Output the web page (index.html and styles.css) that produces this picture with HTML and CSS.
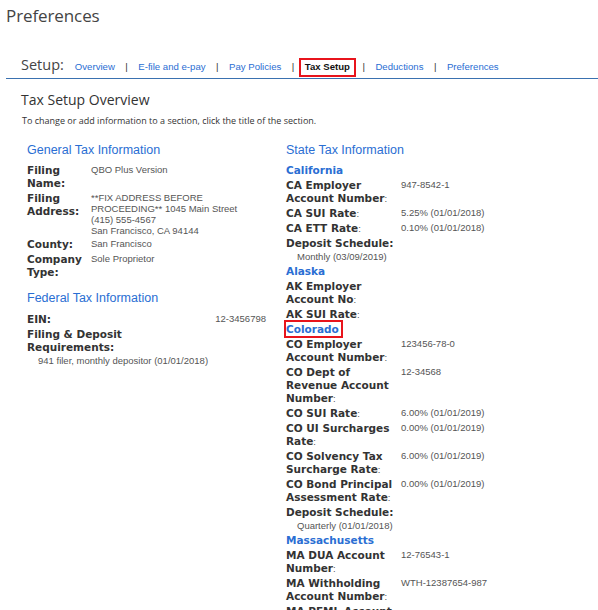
FILE: index.html
```html
<!DOCTYPE html>
<html>
<head>
<meta charset="utf-8">
<title>Preferences</title>
<link rel="stylesheet" href="styles.css">
</head>
<body>
<div class="page">
  <h1 class="page-title">Preferences</h1>
  <nav class="setup-bar">
    <span class="setup-label">Setup:</span>
    <div class="tabs">
      <a class="tab">Overview</a><span class="sep">|</span>
      <a class="tab">E-file and e-pay</a><span class="sep">|</span>
      <a class="tab">Pay Policies</a><span class="sep">|</span>
      <a class="tab active">Tax Setup</a><span class="sep">|</span>
      <a class="tab">Deductions</a><span class="sep">|</span>
      <a class="tab">Preferences</a>
    </div>
  </nav>

  <h2 class="overview-title">Tax Setup Overview</h2>
  <p class="hint">To change or add information to a section, click the title of the section.</p>

  <div class="columns">
    <div class="col col-left">
      <h3 class="sec-title">General Tax Information</h3>
      <div class="row gen">
        <div class="k">Filing Name:</div>
        <div class="v">QBO Plus Version</div>
      </div>
      <div class="row gen">
        <div class="k">Filing Address:</div>
        <div class="v">**FIX ADDRESS BEFORE<br>PROCEEDING** 1045 Main Street<br>(415) 555-4567<br>San Francisco, CA 94144</div>
      </div>
      <div class="row gen">
        <div class="k">County:</div>
        <div class="v">San Francisco</div>
      </div>
      <div class="row gen">
        <div class="k">Company Type:</div>
        <div class="v">Sole Proprietor</div>
      </div>

      <h3 class="sec-title federal">Federal Tax Information</h3>
      <div class="fed-row">
        <div class="k">EIN:</div>
        <div class="v">12-3456798</div>
      </div>
      <div class="block">
        <div class="k fed-k">Filing &amp; Deposit Requirements:</div>
        <div class="sub">941 filer, monthly depositor (01/01/2018)</div>
      </div>
    </div>

    <div class="col col-right">
      <h3 class="sec-title">State Tax Information</h3>

      <div class="state"><span class="state-name">California</span></div>
      <div class="row st">
        <div class="k">CA Employer Account Number<span class="c">:</span></div>
        <div class="v">947-8542-1</div>
      </div>
      <div class="row st">
        <div class="k">CA SUI Rate<span class="c">:</span></div>
        <div class="v">5.25% (01/01/2018)</div>
      </div>
      <div class="row st">
        <div class="k">CA ETT Rate<span class="c">:</span></div>
        <div class="v">0.10% (01/01/2018)</div>
      </div>
      <div class="block">
        <div class="k">Deposit Schedule:</div>
        <div class="sub">Monthly (03/09/2019)</div>
      </div>

      <div class="state"><span class="state-name">Alaska</span></div>
      <div class="row st">
        <div class="k">AK Employer Account No<span class="c">:</span></div>
        <div class="v"></div>
      </div>
      <div class="row st">
        <div class="k">AK SUI Rate<span class="c">:</span></div>
        <div class="v"></div>
      </div>

      <div class="state"><span class="state-name selected">Colorado</span></div>
      <div class="row st">
        <div class="k">CO Employer Account Number<span class="c">:</span></div>
        <div class="v">123456-78-0</div>
      </div>
      <div class="row st">
        <div class="k">CO Dept of Revenue Account Number<span class="c">:</span></div>
        <div class="v">12-34568</div>
      </div>
      <div class="row st">
        <div class="k">CO SUI Rate<span class="c">:</span></div>
        <div class="v">6.00% (01/01/2019)</div>
      </div>
      <div class="row st">
        <div class="k">CO UI Surcharges Rate<span class="c">:</span></div>
        <div class="v">0.00% (01/01/2019)</div>
      </div>
      <div class="row st">
        <div class="k">CO Solvency Tax Surcharge Rate<span class="c">:</span></div>
        <div class="v">6.00% (01/01/2019)</div>
      </div>
      <div class="row st">
        <div class="k">CO Bond Principal Assessment Rate<span class="c">:</span></div>
        <div class="v">0.00% (01/01/2019)</div>
      </div>
      <div class="block">
        <div class="k">Deposit Schedule:</div>
        <div class="sub">Quarterly (01/01/2018)</div>
      </div>

      <div class="state"><span class="state-name">Massachusetts</span></div>
      <div class="row st">
        <div class="k">MA DUA Account Number<span class="c">:</span></div>
        <div class="v">12-76543-1</div>
      </div>
      <div class="row st">
        <div class="k">MA Withholding Account Number<span class="c">:</span></div>
        <div class="v">WTH-12387654-987</div>
      </div>
      <div class="row st">
        <div class="k">MA PFML Account Number<span class="c">:</span></div>
        <div class="v"></div>
      </div>
    </div>
  </div>
</div>
</body>
</html>
```

FILE: styles.css
```css
* { box-sizing: border-box; }

body {
  margin: 0;
  background: #ffffff;
  color: #333333;
  font-family: "Liberation Sans", Arial, sans-serif;
}

.page {
  padding: 0 0 0 6px;
}

.page-title {
  margin: 0;
  padding-top: 4px;
  font: 400 17px/24px "Open Sans", sans-serif;
  letter-spacing: -0.1px;
  color: #444444;
}

.setup-bar {
  display: flex;
  align-items: baseline;
  height: 24px;
  margin-top: 27px;
  padding-left: 15px;
  border-bottom: 1px solid #3a71b0;
}

.setup-label {
  font: 400 14.5px/20px "Open Sans", sans-serif;
  color: #444444;
}

.tabs {
  display: flex;
  align-items: baseline;
  margin-left: 11px;
  font: 400 9.6px/12px "Liberation Sans", Arial, sans-serif;
}

.tab {
  color: #2a6ed3;
  text-decoration: none;
}

.tab.active {
  color: #111111;
  font-weight: 700;
  padding: 1px 4px 2px;
  margin: -1px -2px -2px -4px;
  outline: 2px solid #e8141c;
}

.sep {
  margin: 0 10.5px;
  color: #333333;
}

.overview-title {
  margin: 11px 0 0 15px;
  font: 400 14px/20px "Open Sans", sans-serif;
  color: #333333;
}

.hint {
  margin: 5px 0 0 16px;
  font: 400 9px/12px "Open Sans", sans-serif;
  color: #333333;
}

.columns {
  display: grid;
  grid-template-columns: 239px 1fr;
  column-gap: 20px;
  margin: 16px 0 0 21px;
}

.sec-title {
  margin: 0 0 5.5px;
  font: 400 12.5px/15px "Liberation Sans", Arial, sans-serif;
  color: #2a6ed3;
}

.sec-title.federal {
  margin-top: 12px;
  margin-bottom: 7px;
}

.k {
  font: 700 10.5px/13px "DejaVu Sans", Verdana, sans-serif;
  color: #333333;
}

.k .c {
  font-weight: 400;
  font-family: "Liberation Sans", Arial, sans-serif;
  font-size: 9.5px;
  color: #555555;
}

.v {
  font: 400 9.5px/11px "Liberation Sans", Arial, sans-serif;
  color: #555555;
}

.sub {
  padding-left: 11px;
  font: 400 9.5px/13px "Liberation Sans", Arial, sans-serif;
  color: #555555;
}

.row {
  display: grid;
  margin-bottom: 2px;
}

.row.gen {
  grid-template-columns: 64px 1fr;
}

.row.st {
  grid-template-columns: 115px 1fr;
}

.fed-row {
  display: flex;
  justify-content: space-between;
  margin-bottom: 2px;
}

.fed-k {
  width: 125px;
}

.block {
  margin-bottom: 2px;
}

.state {
  margin-bottom: 2px;
  font: 700 10.5px/13px "DejaVu Sans", Verdana, sans-serif;
}

.state-name {
  color: #2a6ed3;
}

.state-name.selected {
  padding: 1px 2px 1px 0;
  outline: 2px solid #e8141c;
}
```
